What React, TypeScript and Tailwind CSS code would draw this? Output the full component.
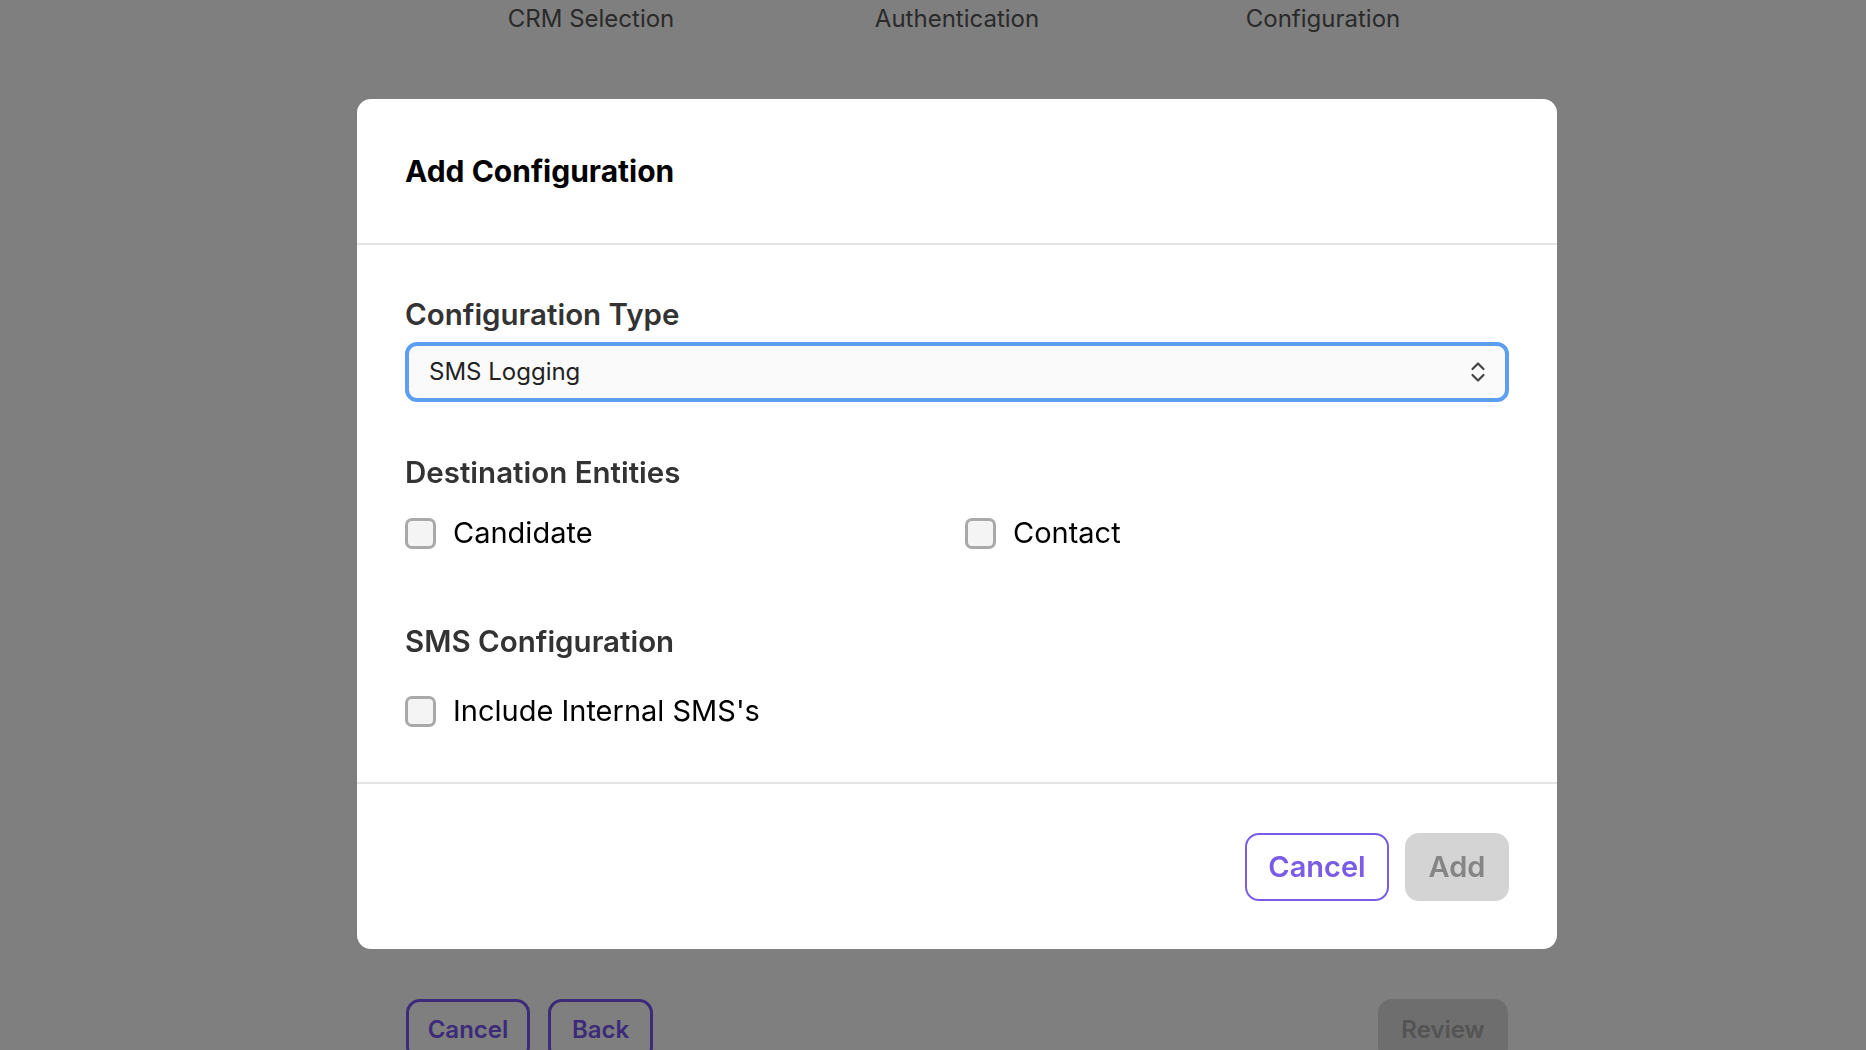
import { useState } from "react";

function Checkbox({ label }: { label: string }) {
  const [checked, setChecked] = useState(false);
  return (
    <label className="flex items-center gap-[17px] h-9 cursor-pointer">
      <span
        onClick={() => setChecked(!checked)}
        className="w-[31px] h-[31px] rounded-[7px] border-[3px] border-[#a9a9a9] bg-[#f4f4f4] shrink-0"
      />
      <span className="text-[29px] text-black">{label}</span>
    </label>
  );
}

function Background() {
  return (
    <div className="h-screen overflow-hidden bg-white flex flex-col pl-[48px]">
      <div className="flex justify-center text-[24px] text-[#555] leading-none pt-[7px]">
        <div className="w-[366px] text-center">CRM Selection</div>
        <div className="w-[366px] text-center">Authentication</div>
        <div className="w-[366px] text-center">Configuration</div>
      </div>
      <div className="flex-1" />
      <div className="w-[1102px] mx-auto flex justify-between translate-y-[11px]">
        <div className="flex gap-[18px]">
          <button className="h-[62px] w-[124px] rounded-[14px] border-[3px] border-[#7656f0] text-[#7656f0] text-[24px] font-semibold">
            Cancel
          </button>
          <button className="h-[62px] w-[105px] rounded-[14px] border-[3px] border-[#7656f0] text-[#7656f0] text-[24px] font-semibold">
            Back
          </button>
        </div>
        <button className="h-[62px] w-[130px] rounded-[14px] bg-[#dcdcdc] text-[#a9a9a9] text-[24px] font-semibold">
          Review
        </button>
      </div>
    </div>
  );
}

export default function App() {
  return (
    <div className="relative font-['Inter','Liberation_Sans',sans-serif]">
      <Background />
      <div className="fixed inset-0 bg-black/50 flex items-center justify-center pl-[48px] pb-[2px]">
        <div className="w-[1200px] bg-white rounded-[14px] flex flex-col">
          <div className="h-[146px] px-12 flex items-center border-b-2 border-[#e4e4e4]">
            <h1 className="text-[30px] font-bold text-black">Add Configuration</h1>
          </div>
          <div className="px-12 pt-[53px] pb-[53px] flex flex-col">
            <div className="text-[29.5px] leading-8 font-semibold text-[#333]">Configuration Type</div>
            <div className="mt-[12px] h-[60px] rounded-[12px] border-4 border-[#5b9ef2] bg-[#fafafa] flex items-center justify-between pl-[20px] pr-[18px]">
              <span className="text-[24px] text-[#222]">SMS Logging</span>
              <svg width="18" height="24" viewBox="0 0 18 24" fill="none" stroke="#444" strokeWidth="2.2" strokeLinecap="round" strokeLinejoin="round">
                <path d="M3.5 9l5.5-5.5 5.5 5.5" />
                <path d="M3.5 15l5.5 5.5 5.5-5.5" />
              </svg>
            </div>
            <div className="mt-[54px] text-[29.5px] leading-8 font-semibold text-[#333]">Destination Entities</div>
            <div className="mt-[27px] grid grid-cols-2 gap-4">
              <Checkbox label="Candidate" />
              <Checkbox label="Contact" />
            </div>
            <div className="mt-[74px] text-[29.5px] leading-8 font-semibold text-[#333]">SMS Configuration</div>
            <div className="mt-[36px]">
              <Checkbox label="Include Internal SMS's" />
            </div>
          </div>
          <div className="border-t-2 border-[#e4e4e4] px-12 pt-[49px] pb-[48px] flex justify-end gap-4">
            <button className="h-[68px] w-[144px] rounded-[14px] border-2 border-[#7b5ce6] text-[#7b5ce6] text-[29px] font-semibold">
              Cancel
            </button>
            <button className="h-[68px] w-[104px] rounded-[14px] bg-[#d4d4d4] text-[#858585] text-[29px] font-semibold">
              Add
            </button>
          </div>
        </div>
      </div>
    </div>
  );
}
